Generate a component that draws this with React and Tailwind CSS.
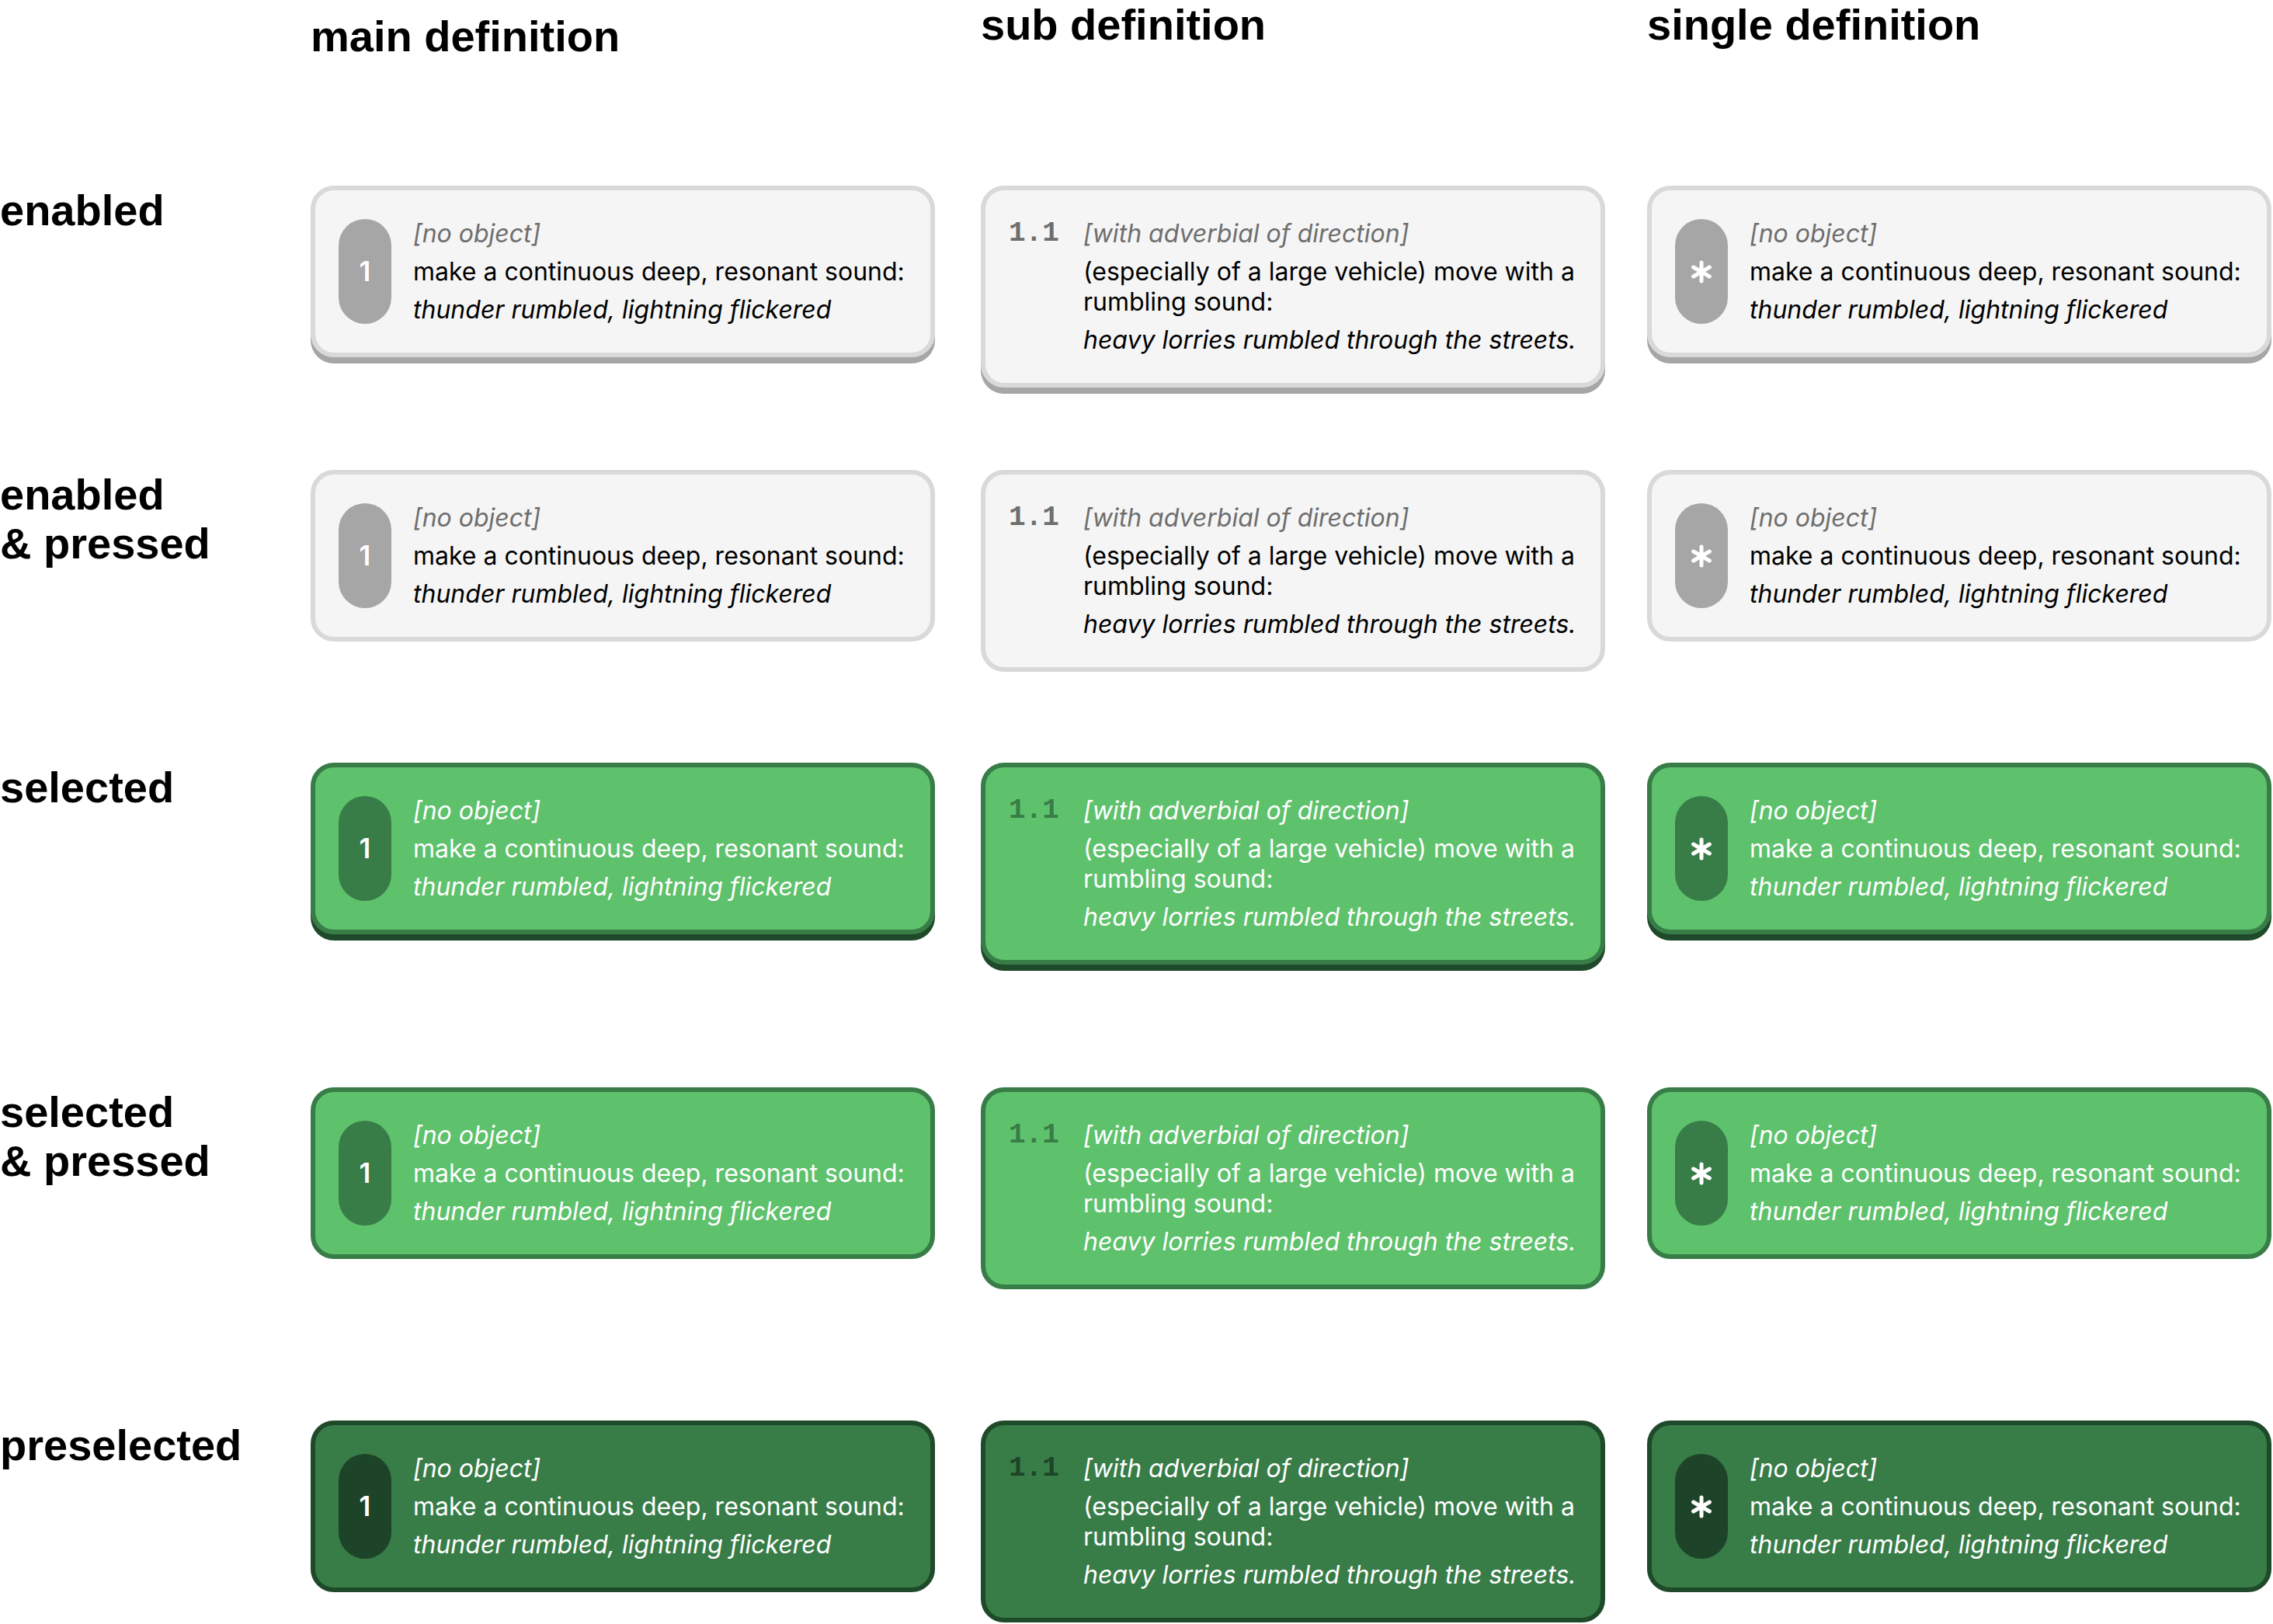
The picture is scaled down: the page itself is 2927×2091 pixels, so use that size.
import React from 'react';

const states = {
  enabled: {
    card: 'bg-[#f5f5f5] border-[#d9d9d9] shadow-[0_8px_0_#a6a6a6]',
    pill: 'bg-[#a6a6a6]',
    num: 'text-[#6e6e6e]',
    tag: 'text-[#6e6e6e]',
    text: 'text-black',
  },
  enabledPressed: {
    card: 'bg-[#f5f5f5] border-[#d9d9d9]',
    pill: 'bg-[#a6a6a6]',
    num: 'text-[#6e6e6e]',
    tag: 'text-[#6e6e6e]',
    text: 'text-black',
  },
  selected: {
    card: 'bg-[#5ec16c] border-[#387c48] shadow-[0_8px_0_#1f4a2a]',
    pill: 'bg-[#387c48]',
    num: 'text-[#387c48]',
    tag: 'text-white',
    text: 'text-white',
  },
  selectedPressed: {
    card: 'bg-[#5ec16c] border-[#387c48]',
    pill: 'bg-[#387c48]',
    num: 'text-[#387c48]',
    tag: 'text-white',
    text: 'text-white',
  },
  preselected: {
    card: 'bg-[#387c48] border-[#1f4a2a]',
    pill: 'bg-[#1d4428]',
    num: 'text-[#1d4428]',
    tag: 'text-white',
    text: 'text-white',
  },
};

const rows = [
  { label: ['enabled'], state: 'enabled', h: 'h-[366px]' },
  { label: ['enabled', '& pressed'], state: 'enabledPressed', h: 'h-[377px]' },
  { label: ['selected'], state: 'selected', h: 'h-[418px]' },
  { label: ['selected', '& pressed'], state: 'selectedPressed', h: 'h-[429px]' },
  { label: ['preselected'], state: 'preselected', h: 'h-[262px]' },
];

const Asterisk = () => (
  <svg width="30" height="30" viewBox="0 0 30 30" fill="none" stroke="white" strokeWidth="5" strokeLinecap="round">
    <line x1="15" y1="3" x2="15" y2="27" />
    <line x1="4.6" y1="9" x2="25.4" y2="21" />
    <line x1="4.6" y1="21" x2="25.4" y2="9" />
  </svg>
);

const Card = ({ kind, state }) => {
  const s = states[state];
  const isSub = kind === 'sub';
  return (
    <div className={`w-[804px] rounded-[30px] border-[6px] pl-[30px] pr-[10px] py-[36px] flex gap-[28px] ${isSub ? 'items-start' : 'items-center'} ${s.card}`}>
      {isSub ? (
        <div className={`w-[68px] shrink-0 font-['Liberation_Mono',monospace] font-bold text-[36px] leading-[39px] ${s.num}`}>1.1</div>
      ) : (
        <div className={`w-[68px] h-[135px] shrink-0 rounded-full flex items-center justify-center text-white ${s.pill}`}>
          {kind === 'main' ? (
            <span className="font-['Inter',sans-serif] font-semibold text-[35px]">1</span>
          ) : (
            <Asterisk />
          )}
        </div>
      )}
      <div className="flex-1 flex flex-col gap-[10px] font-['Inter',sans-serif] text-[32px] leading-[39px]">
        <p className={`italic ${s.tag}`}>{isSub ? '[with adverbial of direction]' : '[no object]'}</p>
        <p className={s.text}>
          {isSub ? '(especially of a large vehicle) move with a rumbling sound:' : 'make a continuous deep, resonant sound:'}
        </p>
        <p className={`italic ${s.text}`}>
          {isSub ? 'heavy lorries rumbled through the streets.' : 'thunder rumbled, lightning flickered'}
        </p>
      </div>
    </div>
  );
};

export default function App() {
  return (
    <div className="w-[2927px] h-[2091px] bg-white overflow-hidden font-['Liberation_Sans',Arial,sans-serif] text-black">
      {/* column headers */}
      <div className="flex items-start h-[239px] text-[56px] leading-[64px] font-bold">
        <div className="w-[400px] shrink-0" />
        <div className="w-[804px] mt-[15px]">main definition</div>
        <div className="w-[804px] ml-[59px]">sub definition</div>
        <div className="w-[804px] ml-[54px]">single definition</div>
      </div>

      {rows.map((row) => (
        <div key={row.state} className={`flex items-start ${row.h}`}>
          <div className="w-[400px] shrink-0 text-[56px] leading-[63px] font-bold">
            {row.label.map((l) => (
              <div key={l}>{l}</div>
            ))}
          </div>
          <Card kind="main" state={row.state} />
          <div className="ml-[59px]">
            <Card kind="sub" state={row.state} />
          </div>
          <div className="ml-[54px]">
            <Card kind="single" state={row.state} />
          </div>
        </div>
      ))}
    </div>
  );
}
